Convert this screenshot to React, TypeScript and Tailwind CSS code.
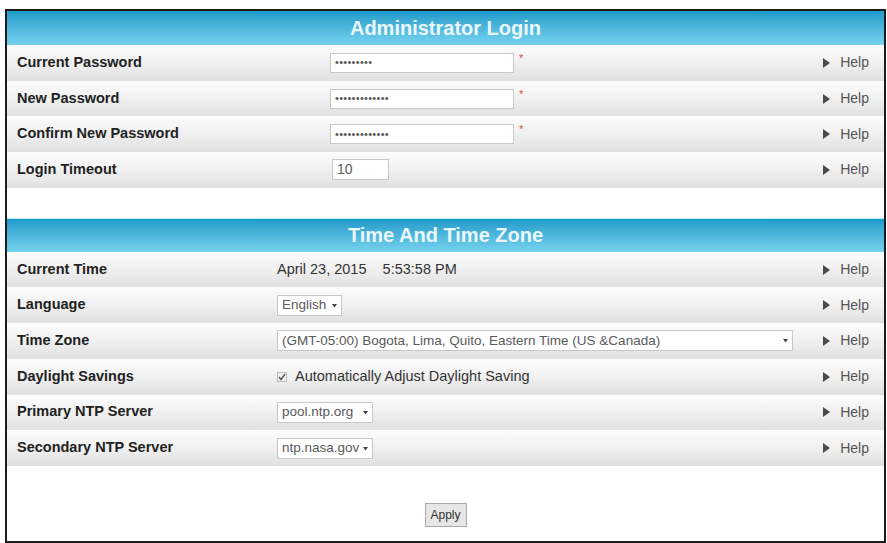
import type { ReactNode } from 'react';

const FONT = { fontFamily: '"Liberation Sans", Arial, sans-serif' };

const ROW = 'flex h-[35.7px] items-center bg-linear-to-b from-[#fdfdfd] via-[#f0f0f0] to-[#e0e0e0]';
const HEADER =
  'flex h-[34px] items-center justify-center bg-linear-to-b from-[#1b9bc9] to-[#76d3f0] text-[20px] font-bold text-[#eaf8fd]';
const BOX = 'flex h-[21px] items-center border border-[#c8c8c8] bg-white px-[4px] text-[13.5px] text-[#5a5a5a]';

function HelpLink() {
  return (
    <div className="flex items-center gap-[10px] pr-[15px] text-[14px] text-[#555]">
      <svg width="7" height="10" viewBox="0 0 7 10" aria-hidden>
        <path d="M0 0 L7 5 L0 10 Z" fill="#4a4a4a" />
      </svg>
      <span>Help</span>
    </div>
  );
}

function Row({ label, labelWidth, children }: { label: string; labelWidth: string; children?: ReactNode }) {
  return (
    <div className={ROW}>
      <div className={`${labelWidth} shrink-0 pl-[10px] text-[14.5px] font-bold text-[#222]`}>{label}</div>
      <div className="flex min-w-0 flex-1 items-center">{children}</div>
      <HelpLink />
    </div>
  );
}

function PasswordField({ dots }: { dots: number }) {
  return (
    <div className="flex items-start gap-[5px]">
      <div className="flex h-[20px] w-[184px] items-center border border-[#c8c8c8] bg-white px-[4px] text-[11px] leading-none tracking-[0.3px] text-[#555]">
        {'•'.repeat(dots)}
      </div>
      <span className="text-[11px] leading-none text-[#d64a4a]">*</span>
    </div>
  );
}

function Caret() {
  return (
    <svg width="5" height="5" viewBox="0 0 5 5" aria-hidden className="ml-1 shrink-0">
      <path d="M0 1 L5 1 L2.5 4.5 Z" fill="#444" />
    </svg>
  );
}

function Select({ value, width }: { value: string; width: string }) {
  return (
    <div className={`${BOX} ${width} justify-between`}>
      <span className="whitespace-nowrap">{value}</span>
      <Caret />
    </div>
  );
}

export default function App() {
  return (
    <div className="min-h-[543px] bg-white pt-[9px]" style={FONT}>
      <div className="ml-[5px] h-[534px] w-[881px] border-2 border-[#1c1c1c] bg-white">
        <div className={HEADER}>Administrator Login</div>
        <Row label="Current Password" labelWidth="w-[323px]">
          <PasswordField dots={9} />
        </Row>
        <Row label="New Password" labelWidth="w-[323px]">
          <PasswordField dots={13} />
        </Row>
        <Row label="Confirm New Password" labelWidth="w-[323px]">
          <PasswordField dots={13} />
        </Row>
        <Row label="Login Timeout" labelWidth="w-[323px]">
          <div className={`${BOX} ml-[2px] w-[57px] text-[14px]`}>10</div>
        </Row>

        <div className="h-[30px] bg-white" />

        <div className={`${HEADER} border-t border-[#b7ecfa]`}>Time And Time Zone</div>
        <Row label="Current Time" labelWidth="w-[270px]">
          <span className="whitespace-pre text-[14.5px] text-[#333]">{'April 23, 2015    5:53:58 PM'}</span>
        </Row>
        <Row label="Language" labelWidth="w-[270px]">
          <Select value="English" width="w-[65px]" />
        </Row>
        <Row label="Time Zone" labelWidth="w-[270px]">
          <Select value="(GMT-05:00) Bogota, Lima, Quito, Eastern Time (US &Canada)" width="w-[516px]" />
        </Row>
        <Row label="Daylight Savings" labelWidth="w-[270px]">
          <div className="flex items-center gap-[8px] text-[14.5px] text-[#333]">
            <span className="flex h-[10px] w-[10px] items-center justify-center border border-[#bbb] bg-[#f0f0f0]">
              <svg width="8" height="8" viewBox="0 0 8 8" aria-hidden>
                <path d="M1 4 L3 6.5 L7 1" stroke="#555" strokeWidth="1.4" fill="none" />
              </svg>
            </span>
            <span>Automatically Adjust Daylight Saving</span>
          </div>
        </Row>
        <Row label="Primary NTP Server" labelWidth="w-[270px]">
          <Select value="pool.ntp.org" width="w-[96px]" />
        </Row>
        <Row label="Secondary NTP Server" labelWidth="w-[270px]">
          <Select value="ntp.nasa.gov" width="w-[96px]" />
        </Row>

        <div className="flex justify-center pt-[37px]">
          <button
            type="button"
            className="h-[24px] w-[42px] border border-[#a9a9a9] bg-[#e6e6e6] text-[12px] text-[#333]"
          >
            Apply
          </button>
        </div>
      </div>
    </div>
  );
}
